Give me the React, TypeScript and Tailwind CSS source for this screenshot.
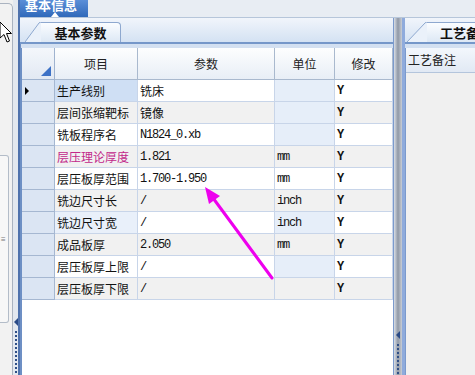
import React from 'react'

type Row = {
  name: string
  value: string
  unit: string
  cjkValue?: boolean
  nameBg?: string
  unitTint?: boolean
  pink?: boolean
}

const rows: Row[] = [
  { name: '生产线别', value: '铣床', unit: '', cjkValue: true, nameBg: 'bg-[#cfdff4]', unitTint: true },
  { name: '层间张缩靶标', value: '镜像', unit: '', cjkValue: true, unitTint: true },
  { name: '铣板程序名', value: 'N1824_0.xb', unit: '', unitTint: true },
  { name: '层压理论厚度', value: '1.821', unit: 'mm', pink: true },
  { name: '层压板厚范围', value: '1.700-1.950', unit: 'mm' },
  { name: '铣边尺寸长', value: '/', unit: 'inch' },
  { name: '铣边尺寸宽', value: '/', unit: 'inch', nameBg: 'bg-[#e9f0fa]', unitTint: true },
  { name: '成品板厚', value: '2.050', unit: 'mm' },
  { name: '层压板厚上限', value: '/', unit: '', unitTint: true },
  { name: '层压板厚下限', value: '/', unit: '' },
]

const cjk = "font-['Noto_Sans_CJK_SC',sans-serif]"
const mono = "font-['Liberation_Mono',monospace] tracking-[-1.2px]"

function Dots ({ count }: { count: number }) {
  return (
    <div className="flex flex-col items-center gap-[2px]">
      {Array.from({ length: count }).map((_, i) => (
        <div key={i} className="w-[2px] h-[2px] bg-[#2f4f86]" />
      ))}
    </div>
  )
}

function Tab ({ label }: { label: string }) {
  return (
    <div className="flex items-end h-[20px]">
      <svg width="16" height="20" viewBox="0 0 16 20" className="block shrink-0">
        <path d="M0 20 L14 1 Q15 0 16 0 L16 20 Z" fill="#eaf1fa" />
        <path d="M0 20 L14 1 Q15 0 16 0" fill="none" stroke="#8ea8cf" strokeWidth="1" />
      </svg>
      <div className="h-[20px] w-[80px] shrink-0 border-t border-r border-[#8ea8cf] rounded-tr-[4px] bg-gradient-to-b from-[#fbfdff] to-[#dde8f5] flex items-center justify-center">
        <span className={`${cjk} text-[13px] font-bold text-[#111] leading-none`}>{label}</span>
      </div>
    </div>
  )
}

export default function App () {
  return (
    <div className="relative w-[475px] h-[375px] overflow-hidden flex bg-[#f0f0f0] select-none">
      {/* left collapsed panel */}
      <div className="w-[13px] shrink-0 h-full pt-[3px]">
        <div className="h-full border-t border-r border-[#aab3c0] rounded-tr-[5px] bg-[#f2f2f2] pt-[151px]">
          <div className="w-[9px] h-[168px] border border-l-0 border-[#b3bcc8] rounded-r-[3px] bg-[#f7f7f7] flex flex-col justify-center pl-[1px]">
            <span className="text-[8px] leading-none text-[#777]">≡</span>
          </div>
        </div>
      </div>

      {/* left splitter */}
      <div className="w-[7px] shrink-0 h-full bg-[#e3e8ef] border-r-2 border-[#4f72ad] flex flex-col items-center pt-[318px]">
        <div className="w-0 h-0 border-y-[4px] border-y-transparent border-r-[4px] border-r-[#2a4a86] mb-[5px]" />
        <Dots count={12} />
      </div>

      {/* content */}
      <div className="flex-1 min-w-0 flex flex-col">
        {/* top tab strip */}
        <div className="h-[18px] bg-[#e8edf3] border-b border-[#b6c6da] flex">
          <div className="relative w-[68px] h-[17px] bg-gradient-to-b from-[#5b8fd8] to-[#2f69ba] pl-[5px] overflow-hidden">
            <div className={`${cjk} text-[13px] font-bold text-white leading-[14px] -mt-[2px]`}>基本信息</div>
            <div className="absolute bottom-0 left-[31px] w-0 h-0 border-x-[4px] border-x-transparent border-b-[5px] border-b-white" />
          </div>
        </div>

        <div className="flex-1 flex min-w-0">
          {/* main panel */}
          <div className="w-[373px] shrink-0 flex flex-col">
            <div className="h-[24px] bg-gradient-to-b from-[#f1f5fb] to-[#d4e2f3] flex items-end pl-[5px]">
              <Tab label="基本参数" />
            </div>
            <div className="h-[2px] bg-[#7597c9]" />
            <div className="h-[4px] bg-[#d3e0f1] border-l border-[#6d8fc4]" />
            <div className="flex-1 bg-white border-l-2 border-[#6d8fc4]">
              <div className="grid grid-cols-[33px_83px_137px_60px_58px]">
                <div className="h-[32px] bg-gradient-to-b from-[#f4f7fb] to-[#e2e9f3] border-r border-b border-[#9fb3cf] flex items-end justify-end pr-[3px] pb-[3px]">
                  <div className="w-0 h-0 border-l-[10px] border-l-transparent border-b-[10px] border-b-[#3d72c6]" />
                </div>
                {['项目', '参数', '单位', '修改'].map(h => (
                  <div key={h} className={`${cjk} h-[32px] bg-gradient-to-b from-[#fdfefe] to-[#e8eef6] border-r border-b border-[#a9b9ce] flex items-center justify-center text-[12px] text-[#222]`}>
                    {h}
                  </div>
                ))}
                {rows.map((r, i) => {
                  const stripe = i % 2 === 1 ? 'bg-[#f1f1f1]' : 'bg-white'
                  const cell = 'h-[22px] border-r border-b border-[#c8d5e9] px-[2px] flex items-center text-[12px] text-[#111] whitespace-nowrap overflow-hidden'
                  return (
                    <React.Fragment key={i}>
                      <div className="h-[22px] bg-[#dbe5f3] border-r border-b border-[#a5b7d1] flex items-center pl-[3px]">
                        {i === 0 && (
                          <div className="w-0 h-0 border-y-[4px] border-y-transparent border-l-[4px] border-l-black" />
                        )}
                      </div>
                      <div className={`${cell} ${cjk} ${r.nameBg ?? stripe} ${r.pink ? 'text-[#c2288a]' : ''}`}>{r.name}</div>
                      <div className={`${cell} ${stripe} ${r.cjkValue ? cjk : mono}`}>{r.value}</div>
                      <div className={`${cell} ${r.unitTint ? 'bg-[#e6eef9]' : stripe} ${mono}`}>{r.unit}</div>
                      <div className={`${cell} ${stripe} ${mono} font-bold`}>Y</div>
                    </React.Fragment>
                  )
                })}
              </div>
            </div>
          </div>

          {/* right splitter */}
          <div className="w-[12px] shrink-0 h-full border-l border-[#7b9acd] border-r-[3px] border-r-[#8fabdc] bg-gradient-to-r from-[#d9dee6] via-[#8f98a6] to-[#c9ced6] flex flex-col items-center pt-[313px]">
            <div className="w-0 h-0 border-y-[4px] border-y-transparent border-r-[4px] border-r-[#2a4a86] mb-[5px]" />
            <Dots count={10} />
          </div>

          {/* right panel */}
          <div className="flex-1 min-w-0 flex flex-col overflow-hidden">
            <div className="h-[24px] bg-gradient-to-b from-[#f1f5fb] to-[#d4e2f3] flex items-end pl-[2px]">
              <div className="flex items-end h-[20px]">
                <svg width="20" height="20" viewBox="0 0 20 20" className="block shrink-0">
                  <path d="M0 20 L18 1 Q19 0 20 0 L20 20 Z" fill="#eaf1fa" />
                  <path d="M0 20 L18 1 Q19 0 20 0" fill="none" stroke="#8ea8cf" strokeWidth="1" />
                </svg>
                <div className="h-[20px] w-[80px] shrink-0 border-t border-[#8ea8cf] bg-gradient-to-b from-[#fbfdff] to-[#dde8f5] flex items-center pl-[13px]">
                  <span className={`${cjk} text-[13px] font-bold text-[#111] leading-none whitespace-nowrap`}>工艺备注</span>
                </div>
              </div>
            </div>
            <div className="h-[2px] bg-[#7597c9]" />
            <div className="h-[4px] bg-[#d3e0f1]" />
            <div className="flex-1 border-l border-[#7b9acd] bg-[#f0f0f0]">
              <div className={`${cjk} h-[25px] bg-gradient-to-b from-[#f3f7fc] to-[#e1e9f4] border-b border-[#b4c5dc] flex items-center pl-[2px] text-[12px] text-[#222] whitespace-nowrap`}>
                工艺备注
              </div>
            </div>
          </div>
        </div>
      </div>

      {/* mouse cursor */}
      <svg className="absolute left-[-1px] top-[21px]" width="14" height="23" viewBox="0 0 14 23">
        <path d="M1 1 L1 17 L5 13.5 L8 21 L10.5 20 L7.5 12.5 L12.5 12.5 Z" fill="white" stroke="black" strokeWidth="1" />
      </svg>

      {/* magenta annotation arrow */}
      <svg className="absolute left-0 top-0 pointer-events-none" width="475" height="375">
        <line x1="272" y1="278" x2="213" y2="198" stroke="#ee00ee" strokeWidth="3" strokeLinecap="round" />
        <polygon points="205,187 220,196 209,204" fill="#ee00ee" />
      </svg>
    </div>
  )
}
